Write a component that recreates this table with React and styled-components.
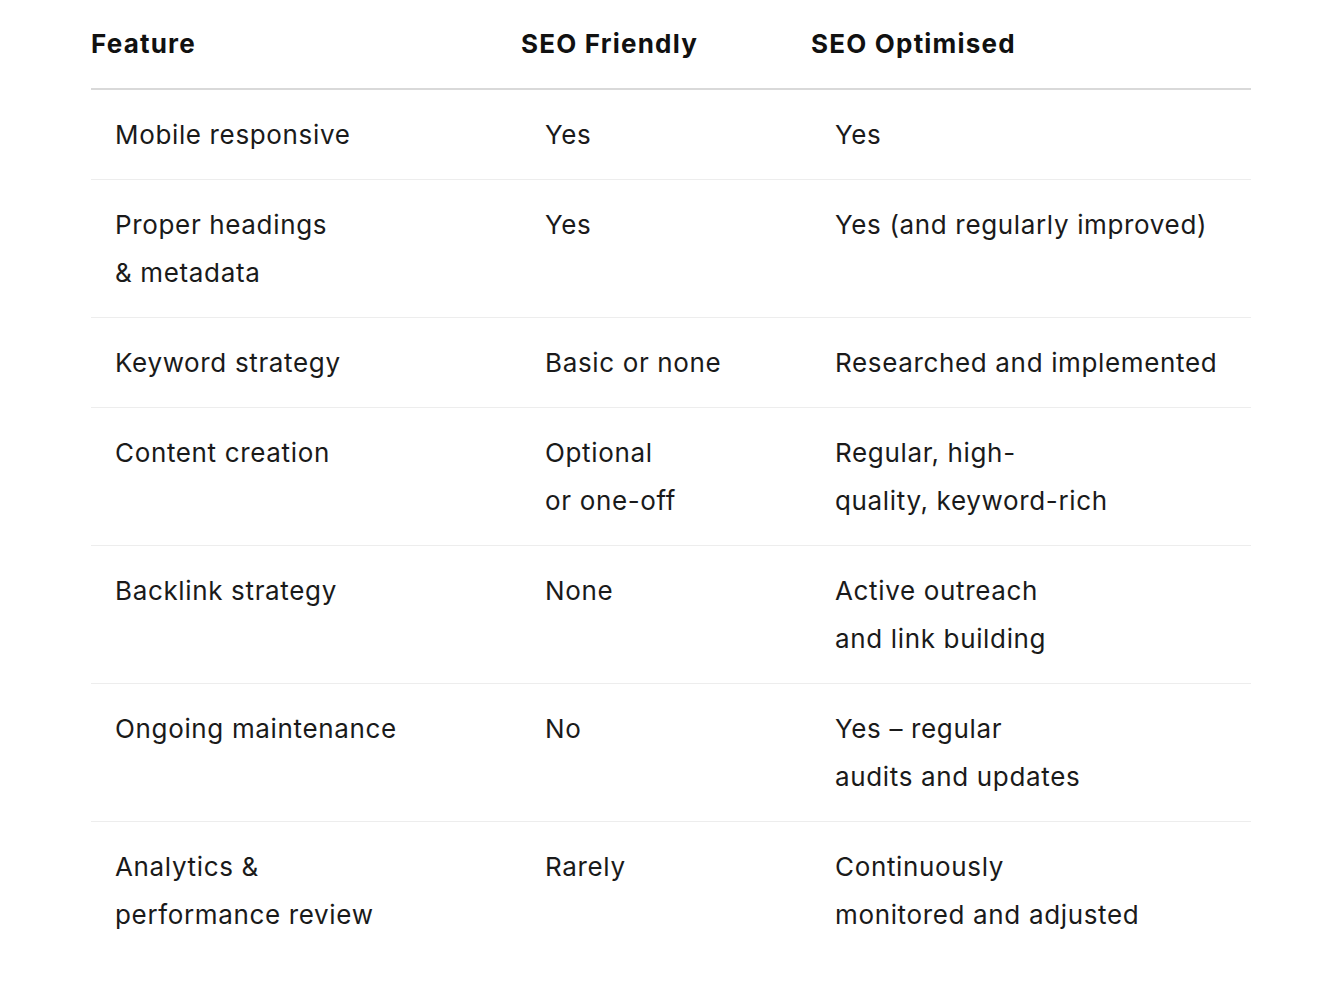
import styled, { createGlobalStyle } from "styled-components"

const GlobalStyle = createGlobalStyle`
  body {
    margin: 0;
    background: #ffffff;
    font-family: Inter, "Noto Sans", "DejaVu Sans", sans-serif;
    color: #1a1a1a;
  }
`

const Page = styled.div`
  padding: 0 79px 0 91px;
`

const Table = styled.table`
  width: 1160px;
  border-collapse: collapse;
  table-layout: fixed;
  font-size: 26px;
`

const Col = styled.col`
  width: ${(p) => p.$w}px;
`

const HeadCell = styled.th`
  text-align: left;
  font-weight: 700;
  letter-spacing: 1.2px;
  height: 88px;
  padding: 0;
  line-height: 48px;
  vertical-align: middle;
  color: #111111;
  border-bottom: 2px solid #d9d9d9;
`

const Row = styled.tr`
  border-bottom: 1px solid #ededed;
  &:last-child {
    border-bottom: none;
  }
`

const Cell = styled.td`
  padding: 21px 24px 20px;
  line-height: 48px;
  letter-spacing: 0.65px;
  vertical-align: top;
  font-weight: 400;
  color: #1a1a1a;
`

const rows = [
  [["Mobile responsive"], ["Yes"], ["Yes"]],
  [["Proper headings", "& metadata"], ["Yes"], ["Yes (and regularly improved)"]],
  [["Keyword strategy"], ["Basic or none"], ["Researched and implemented"]],
  [["Content creation"], ["Optional", "or one-off"], ["Regular, high-", "quality, keyword-rich"]],
  [["Backlink strategy"], ["None"], ["Active outreach", "and link building"]],
  [["Ongoing maintenance"], ["No"], ["Yes – regular", "audits and updates"]],
  [["Analytics &", "performance review"], ["Rarely"], ["Continuously", "monitored and adjusted"]],
]

const Lines = ({ lines }) =>
  lines.map((l, i) => (
    <span key={i}>
      {i > 0 && <br />}
      {l}
    </span>
  ))

const App = () => {
  return (
    <Page>
      <GlobalStyle />
      <Table>
        <colgroup>
          <Col $w={430} />
          <Col $w={290} />
          <Col $w={440} />
        </colgroup>
        <thead>
          <tr>
            <HeadCell>Feature</HeadCell>
            <HeadCell>SEO Friendly</HeadCell>
            <HeadCell>SEO Optimised</HeadCell>
          </tr>
        </thead>
        <tbody>
          {rows.map((r, i) => (
            <Row key={i}>
              {r.map((c, j) => (
                <Cell key={j}>
                  <Lines lines={c} />
                </Cell>
              ))}
            </Row>
          ))}
        </tbody>
      </Table>
    </Page>
  )
}

export default App
